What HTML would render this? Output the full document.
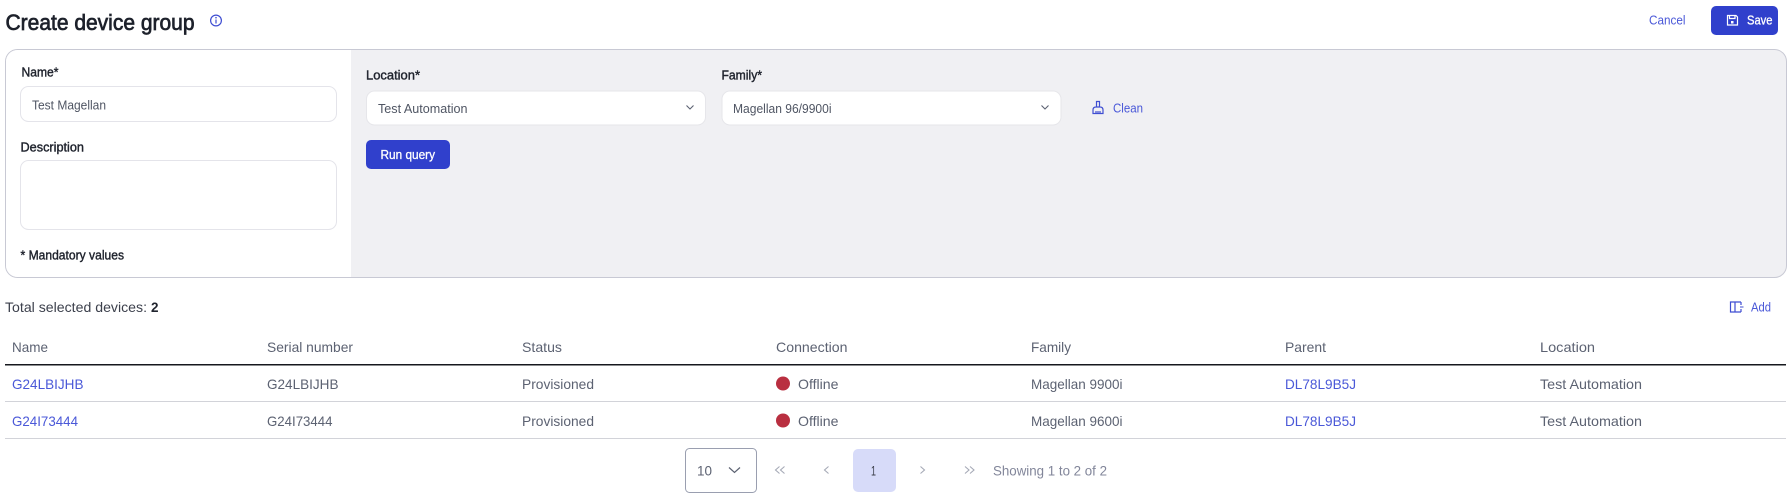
<!DOCTYPE html>
<html><head><meta charset="utf-8">
<style>
html,body{margin:0;padding:0;background:#fff;width:1790px;height:498px;overflow:hidden}
svg{display:block}
text{font-family:"Liberation Sans",sans-serif;font-size:14px;fill:#5c6272}
.d{fill:#20242e;stroke:#20242e;stroke-width:.4px;font-size:13px}
.i{font-size:13px;fill:#4f5563}
.l{fill:#4a58d8}
.w{fill:#fff;stroke:#fff;stroke-width:.3px;font-size:13px}
.s{font-size:13px}
</style></head><body>
<svg width="1790" height="498" viewBox="0 0 1790 498" xmlns="http://www.w3.org/2000/svg">
<text x="5.5" y="30" textLength="189" lengthAdjust="spacingAndGlyphs" style="font-size:22px;fill:#1d212b;stroke:#1d212b;stroke-width:.7px">Create device group</text>
<g fill="none" stroke="#3f4ed2" stroke-width="1.2"><circle cx="216" cy="20.500" r="5.400"/><path d="M216 19.500v4"/></g><circle cx="216" cy="17.700" r=".8" fill="#3f4ed2"/>

<rect x="5.5" y="49.5" width="1781" height="228" rx="12" fill="#f0f0f3" stroke="#c8c9d4"/>
<path d="M351 50H17.5A11.5 11.5 0 0 0 6 61.5V265.500A11.500 11.500 0 0 0 17.500 277H351Z" fill="#fff"/>

<text class="d" x="21.500" y="76.500" textLength="37" lengthAdjust="spacingAndGlyphs">Name*</text>
<rect x="20.500" y="86.500" width="316" height="35" rx="8" fill="#fff" stroke="#e4e4ea"/>
<text class="i" x="32" y="109.500" textLength="74" lengthAdjust="spacingAndGlyphs">Test Magellan</text>
<text class="d" x="20.500" y="151.500" textLength="63.500" lengthAdjust="spacingAndGlyphs">Description</text>
<rect x="20.500" y="160.500" width="316" height="69" rx="8" fill="#fff" stroke="#e4e4ea"/>
<text class="d" x="20.500" y="259.500" textLength="103.500" lengthAdjust="spacingAndGlyphs">* Mandatory values</text>

<text class="d" x="366" y="79.500" textLength="54" lengthAdjust="spacingAndGlyphs">Location*</text>
<rect x="366.500" y="91" width="339" height="34" rx="8" fill="#fff" stroke="#e6e6ea"/>
<text class="i" x="378" y="113" textLength="89.500" lengthAdjust="spacingAndGlyphs">Test Automation</text>
<path d="M686.500 105.500l3.500 3.500 3.500-3.500" fill="none" stroke="#5c6272" stroke-width="1.100"/>

<text class="d" x="721.500" y="79.500" textLength="40.500" lengthAdjust="spacingAndGlyphs">Family*</text>
<rect x="722" y="91" width="339" height="34" rx="8" fill="#fff" stroke="#e6e6ea"/>
<text class="i" x="733" y="113" textLength="98.500" lengthAdjust="spacingAndGlyphs">Magellan 96/9900i</text>
<path d="M1041.500 105.500l3.500 3.500 3.500-3.500" fill="none" stroke="#5c6272" stroke-width="1.100"/>

<g fill="none" stroke="#3f4ed2" stroke-width="1.200"><path d="M1096.500 107v-5.500h3v5.500M1093 113.500v-3.500q0-3 3-3h4q3 0 3 3v3.500zM1096 113.500v-2.500M1098 113.500v-2.500M1100 113.500v-2.500"/></g>
<text class="l" x="1113" y="112.500" textLength="30" lengthAdjust="spacingAndGlyphs" style="font-size:13px">Clean</text>

<rect x="366" y="140" width="84" height="29" rx="5" fill="#3040cc"/>
<text class="w" x="380.500" y="159" textLength="54.500" lengthAdjust="spacingAndGlyphs">Run query</text>

<text class="l" x="1649" y="24.500" textLength="36.500" lengthAdjust="spacingAndGlyphs" style="font-size:13px">Cancel</text>
<rect x="1711" y="6" width="67" height="29" rx="5" fill="#3040cc"/>
<g fill="none" stroke="#fff" stroke-width="1.200"><path d="M1727.500 15.500h8.500l1.500 1.500v8h-10z"/><path d="M1729.500 15.500v3h5.500v-3"/></g><rect x="1731" y="21" width="2.500" height="2.500" fill="#fff"/>
<text class="w" x="1747" y="24.500" textLength="25.500" lengthAdjust="spacingAndGlyphs">Save</text>

<text x="5" y="312" textLength="142" lengthAdjust="spacingAndGlyphs" style="font-size:14px;fill:#3c404c">Total selected devices:</text>
<text x="151" y="312" textLength="7.500" lengthAdjust="spacingAndGlyphs" style="font-size:14px;font-weight:bold;fill:#20242e">2</text>

<g fill="none" stroke="#3f4ed2" stroke-width="1.200"><path d="M1741 302h-10.500v10h10.500M1735 302v10M1741 302v3M1741 309v3"/><path d="M1740 307h3.500" stroke-width="1"/></g>
<text class="l" x="1751" y="311.500" textLength="20" lengthAdjust="spacingAndGlyphs" style="font-size:13px">Add</text>

<g>
<text x="12" y="352" textLength="36" lengthAdjust="spacingAndGlyphs">Name</text>
<text x="267" y="352" textLength="86" lengthAdjust="spacingAndGlyphs">Serial number</text>
<text x="522" y="352" textLength="40" lengthAdjust="spacingAndGlyphs">Status</text>
<text x="776" y="352" textLength="71.500" lengthAdjust="spacingAndGlyphs">Connection</text>
<text x="1031" y="352" textLength="40" lengthAdjust="spacingAndGlyphs">Family</text>
<text x="1285" y="352" textLength="41" lengthAdjust="spacingAndGlyphs">Parent</text>
<text x="1540" y="352" textLength="55" lengthAdjust="spacingAndGlyphs">Location</text>
</g>
<rect x="5" y="364" width="1781" height="1.500" fill="#16181e"/>
<rect x="5" y="401" width="1781" height="1" fill="#d2d3d9"/>
<rect x="5" y="438" width="1781" height="1" fill="#d2d3d9"/>

<text class="l" x="12" y="389" textLength="71.500" lengthAdjust="spacingAndGlyphs">G24LBIJHB</text>
<text x="267" y="389" textLength="71.500" lengthAdjust="spacingAndGlyphs">G24LBIJHB</text>
<text x="522" y="389" textLength="72" lengthAdjust="spacingAndGlyphs">Provisioned</text>
<circle cx="783" cy="383.500" r="7" fill="#b92f40"/>
<text x="798" y="389" textLength="40.500" lengthAdjust="spacingAndGlyphs">Offline</text>
<text x="1031" y="389" textLength="91.500" lengthAdjust="spacingAndGlyphs">Magellan 9900i</text>
<text class="l" x="1285" y="389" textLength="71" lengthAdjust="spacingAndGlyphs">DL78L9B5J</text>
<text x="1540" y="389" textLength="102" lengthAdjust="spacingAndGlyphs">Test Automation</text>

<text class="l" x="12" y="426" textLength="66" lengthAdjust="spacingAndGlyphs">G24I73444</text>
<text x="267" y="426" textLength="65.500" lengthAdjust="spacingAndGlyphs">G24I73444</text>
<text x="522" y="426" textLength="72" lengthAdjust="spacingAndGlyphs">Provisioned</text>
<circle cx="783" cy="420.500" r="7" fill="#b92f40"/>
<text x="798" y="426" textLength="40.500" lengthAdjust="spacingAndGlyphs">Offline</text>
<text x="1031" y="426" textLength="91.500" lengthAdjust="spacingAndGlyphs">Magellan 9600i</text>
<text class="l" x="1285" y="426" textLength="71" lengthAdjust="spacingAndGlyphs">DL78L9B5J</text>
<text x="1540" y="426" textLength="102" lengthAdjust="spacingAndGlyphs">Test Automation</text>

<rect x="685.500" y="448.500" width="71" height="44" rx="4" fill="#fff" stroke="#9a9fb0"/>
<text x="697" y="475.500" textLength="15" lengthAdjust="spacingAndGlyphs" style="font-size:14px">10</text>
<path d="M729 467.500l5.500 5 5.500-5" fill="none" stroke="#5c6272" stroke-width="1.200"/>
<g fill="none" stroke="#a5a9b6" stroke-width="1.100"><path d="M779.500 466.500l-4 3.500 4 3.500M784.500 466.500l-4 3.500 4 3.500M828.500 466.500l-4 3.500 4 3.500M920.500 466.500l4 3.500-4 3.500M965 466.500l4 3.500-4 3.500M970 466.500l4 3.500-4 3.500"/></g>
<rect x="853" y="449" width="43" height="43" rx="5" fill="#d7dbf9"/>
<text x="871" y="475.500" textLength="5" lengthAdjust="spacingAndGlyphs" style="font-size:14px;fill:#3c404c">1</text>
<text x="993" y="475.500" textLength="114" lengthAdjust="spacingAndGlyphs" style="fill:#82869a;font-size:14px">Showing 1 to 2 of 2</text>
</svg>
</body></html>
